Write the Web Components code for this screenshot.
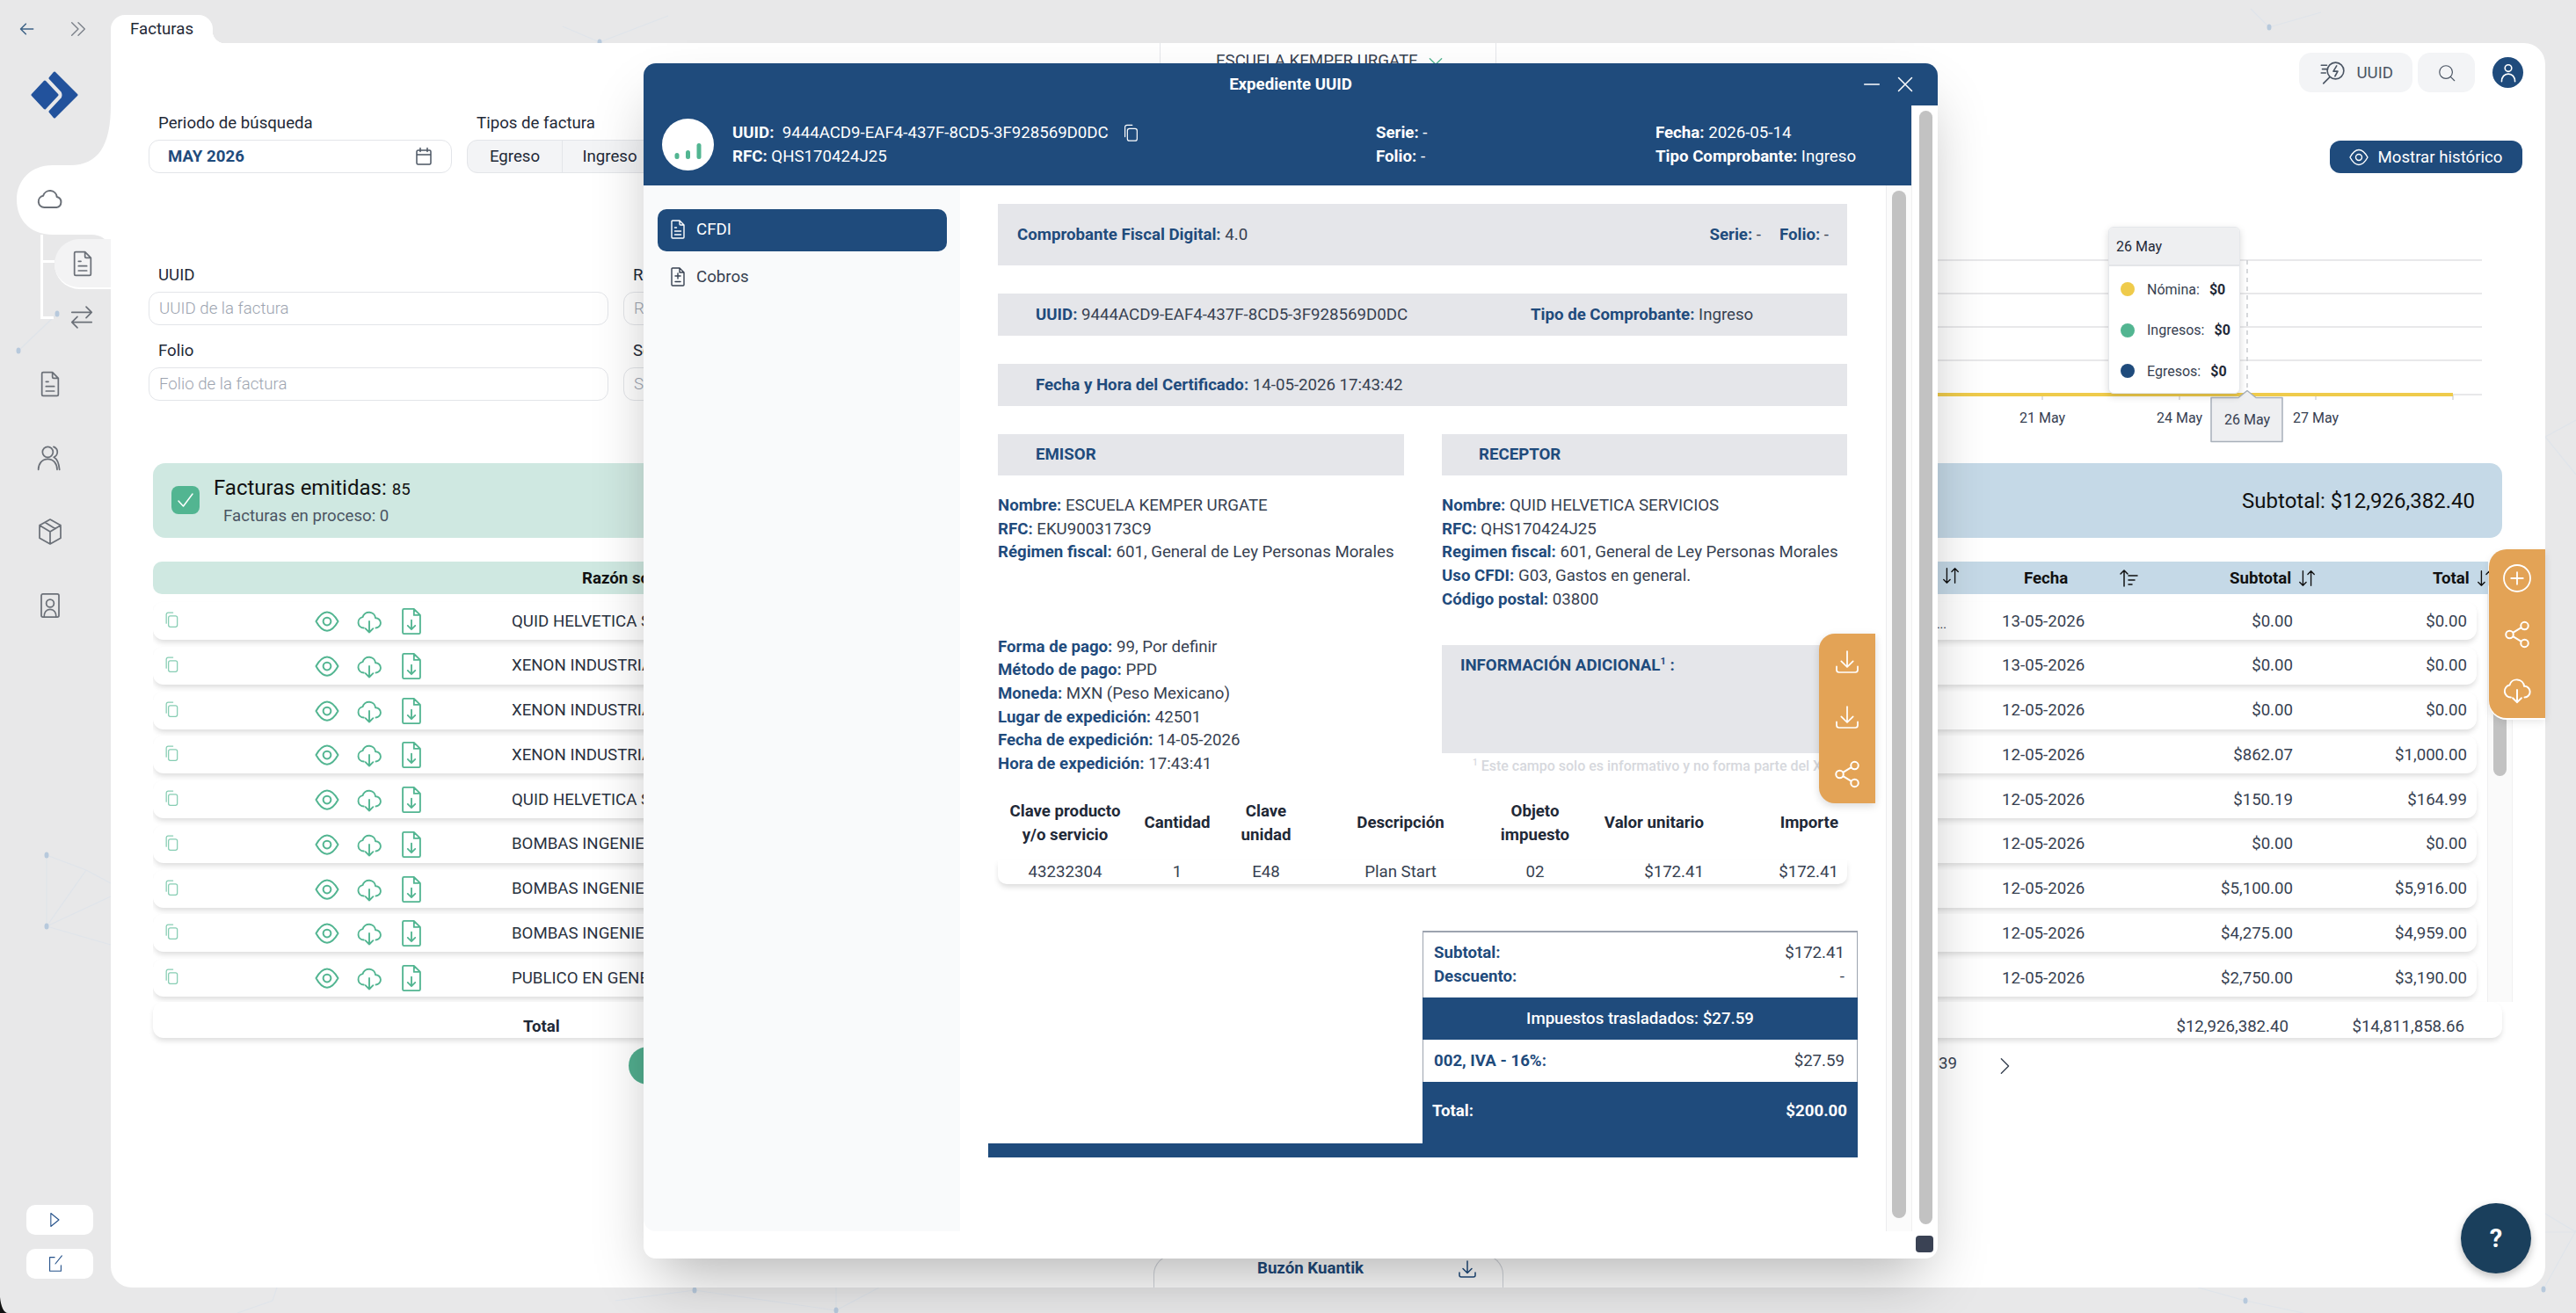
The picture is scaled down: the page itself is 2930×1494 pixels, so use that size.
<!DOCTYPE html>
<html lang="es">
<head>
<meta charset="utf-8">
<title>Facturas</title>
<style>
    html, body { margin: 0; height: 100%; }
    body {
        width: 2930px;
        height: 1494px;
        overflow: hidden;
        position: relative;
        display: grid;
        grid-template-columns: 126px 1fr;
        background: #e8e8e9;
        font-family: Roboto, "Liberation Sans", sans-serif;
        color: #1f2937;
    }
</style>
</head>
<body>
<network-bg></network-bg>
<app-sidebar></app-sidebar>
<app-workspace></app-workspace>
<uuid-modal></uuid-modal>

<script>
// icons, all on a 24 box
const ICONS = {
    doc: 'M6 2h8l5 5v14a1 1 0 0 1-1 1H6a1 1 0 0 1-1-1V3a1 1 0 0 1 1-1zM14 2v4a1 1 0 0 0 1 1h4M8.5 10h2M8.5 14h7M8.5 18h7',
    cobros: 'M6 2h8l5 5v14a1 1 0 0 1-1 1H6a1 1 0 0 1-1-1V3a1 1 0 0 1 1-1zM14 2v5h5M12 8v6M9 11h6M9 17.5h6',
    swap: 'M3 7.5h18M16 2.5l5 5-5 5M21 16.5H3M8 11.5l-5 5 5 5',
    users: 'M10 2.5a4.5 4.5 0 1 1 0 9 4.5 4.5 0 0 1 0-9zM2 22c0-5 3-9 8-9s8 4 8 9M15 2.5c2 .8 3.2 2.5 3.2 4.5s-1.2 3.7-3 4.5c2.8 1.5 4.3 5 4.8 10.5',
    box: 'M12 1.5l9 5v11l-9 5-9-5v-11zM3 6.5l9 5.5 9-5.5M12 12v10.5M7.5 4l9 5.5',
    contact: 'M5.5 1.5h13A1.5 1.5 0 0 1 20 3v18a1.5 1.5 0 0 1-1.5 1.5h-13A1.5 1.5 0 0 1 4 21V3a1.5 1.5 0 0 1 1.5-1.5zM12 6.5a3.5 3.5 0 1 1 0 7 3.5 3.5 0 0 1 0-7zM6.5 22.5c0-4 2-7 5.5-7s5.5 3 5.5 7',
    cloud: 'M7 19.5a5 5 0 0 1-.9-9.9A6 6 0 0 1 17.8 10.5a4.6 4.6 0 0 1-.3 9z',
    back: 'M20 12H4M10 5l-7 7 7 7',
    chevrons: 'M4 4l8 8-8 8M12 4l8 8-8 8',
    calendar: 'M5.5 5h13A1.5 1.5 0 0 1 20 6.5v13a1.5 1.5 0 0 1-1.5 1.5h-13A1.5 1.5 0 0 1 4 19.5v-13A1.5 1.5 0 0 1 5.5 5zM4 10h16M8 2.5v4M16 2.5v4',
    play: 'M7 3l11 9-11 9z',
    external: 'M11 4H5v17h14v-7M12 12l8-10',
    eye: 'M2 12c3-5.5 6-8.5 10-8.5S19 6.5 22 12c-3 5.5-6 8.5-10 8.5S5 17.5 2 12zM12 8.5a3.5 3.5 0 1 1 0 7 3.5 3.5 0 0 1 0-7z',
    clouddown: 'M7 18a5 5 0 0 1-1-9.9A6 6 0 0 1 17.7 9 4.5 4.5 0 0 1 18 18M12 12v10M8.5 18.5L12 22l3.5-3.5',
    filedown: 'M6 2h8l5 5v14a1 1 0 0 1-1 1H6a1 1 0 0 1-1-1V3a1 1 0 0 1 1-1zM14 2v5h5M12 11v7M9 15.5l3 3 3-3',
    copy: 'M5 17V5a2.5 2.5 0 0 1 2.5-2.5H14M10.5 7h7A2.5 2.5 0 0 1 20 9.5v10a2.5 2.5 0 0 1-2.5 2.5h-7A2.5 2.5 0 0 1 8 19.5v-10A2.5 2.5 0 0 1 10.5 7z',
    plus: 'M12 2a10 10 0 1 1 0 20 10 10 0 0 1 0-20zM12 7.5v9M7.5 12h9',
    share: 'M18 2a3 3 0 1 1 0 6 3 3 0 0 1 0-6zM6 9a3 3 0 1 1 0 6 3 3 0 0 1 0-6zM18 16a3 3 0 1 1 0 6 3 3 0 0 1 0-6zM8.7 10.5l6.6-4M8.7 13.5l6.6 4',
    tray: 'M12 3v13M7 11.5l5 5 5-5M3 16v3a2 2 0 0 0 2 2h14a2 2 0 0 0 2-2v-3',
    zap: 'M14 2.5a7.5 7.5 0 1 1 0 15 7.5 7.5 0 0 1 0-15zM9 15.5l-6 6M15 5.5l-3 5h4l-2.5 4.5M1 5h5M2 8.5h3.5M1 12h4',
    search: 'M11 3a8 8 0 1 1 0 16 8 8 0 0 1 0-16zM17 17l4.5 4.5',
    user: 'M12 3.5a3.5 3.5 0 1 1 0 7 3.5 3.5 0 0 1 0-7zM5 21c0-5 3-8 7-8s7 3 7 8',
    sort: 'M7 3v18M3 17l4 4 4-4M17 21V3M13 7l4-4 4 4',
    sortup: 'M6 21V3M2 7l4-4 4 4M11 9h10M11 14h7M11 19h4',
    right: 'M8 3l9 9-9 9',
    down: 'M4 8l8 8 8-8',
    check: 'M4 13l5.5 6L20 5',
    minus: 'M2 12h20',
    close: 'M3 3l18 18M21 3L3 21'
};

class AppIcon extends HTMLElement {
    connectedCallback() {
        const size = this.getAttribute("size") || 24;
        const stroke = this.getAttribute("stroke") || 1.6;
        this.attachShadow({mode: "open"});
        this.shadowRoot.innerHTML = /*html*/`
            <style>
                :host { display: inline-flex; flex: none; line-height: 0; }
            </style>
            <svg width="${size}" height="${size}" viewBox="0 0 24 24" fill="none" stroke="currentColor"
                 stroke-width="${stroke}" stroke-linecap="round" stroke-linejoin="round">
                <path d="${ICONS[this.getAttribute("name")]}"/>
            </svg>`;
    }
}
window.customElements.define("app-icon", AppIcon);

// network-bg
class NetworkBg extends HTMLElement {
    constructor() {
        super();
        this.attachShadow({mode: "open"});
        const lines = [
            [65,357,21,399],[53,973,98,990],[98,990,53,1054],[53,973,53,1054],[53,1054,126,1020],[53,1054,126,1075],
            [98,990,126,1005],[682,48,760,18],[682,48,640,30],[2581,31,2560,10],[2581,31,2640,14],
            [2895,497,2930,478],[2895,497,2930,540],[2895,1381,2930,1402],[2893,1467,2930,1400],[2895,1402,2930,1402],
            [790,1468,951,1491],[790,1468,700,1480],[951,1491,951,1465],[951,1491,1000,1465],
            [315,1465,310,1480],[310,1480,270,1494],[2554,1480,2620,1494],[2554,1480,2500,1465]
        ];
        const dots = [[65,357],[21,399],[53,973],[53,1054],[682,48],[2581,31],[790,1468],[951,1491],[2554,1480],[2893,1467]];
        this.shadowRoot.innerHTML = /*html*/`
            <style>
                :host { position: absolute; inset: 0; display: block; }
            </style>
            <svg width="2930" height="1494" fill="none">
                ${lines.map(l => `<line x1="${l[0]}" y1="${l[1]}" x2="${l[2]}" y2="${l[3]}" stroke="#dfe4ea" stroke-width="1.2"/>`).join("")}
                ${dots.map(d => `<ellipse cx="${d[0]}" cy="${d[1]}" rx="2.5" ry="3.5" fill="#b7c9dc"/>`).join("")}
                <path d="M0 1476C1 1486 4 1494 9 1494H0Z" fill="#111"/>
            </svg>`;
    }
}
window.customElements.define("network-bg", NetworkBg);

// app-sidebar
const appSidebarTemplate = document.createElement("template");
appSidebarTemplate.innerHTML = /*html*/`
    <style>
        :host {
            position: relative;
            display: flex;
            flex-direction: column;
            height: 1494px;
        }
        .bump { position: absolute; left: 0; top: 0; }
        .arrows {
            position: relative;
            height: 66px;
            display: flex;
            align-items: center;
            gap: 37px;
            padding-left: 21px;
            color: #7b8089;
        }
        .arrows app-icon:first-child { color: #3d6286; }
        .logo { position: relative; margin: 15px 0 0 35px; height: 54px; }
        .item {
            position: relative;
            width: 114px;
            height: 84px;
            display: flex;
            align-items: center;
            justify-content: center;
            color: #6b7078;
        }
        .cloud { margin-top: 53px; height: 79px; padding-bottom: 4px; box-sizing: border-box; }
        .tree { position: relative; }
        .tree::before {
            content: "";
            position: absolute;
            left: 46px;
            top: 0;
            width: 12px;
            height: 93px;
            border-left: 3px solid #fff;
            border-bottom: 3px solid #fff;
        }
        .tree::after {
            content: "";
            position: absolute;
            left: 46px;
            top: 29px;
            width: 16px;
            height: 3px;
            background: #fff;
        }
        .sub {
            position: relative;
            margin: 5px 0 0 62px;
            height: 57px;
            box-sizing: border-box;
            background: #f3f3f4;
            border-radius: 30px 0 0 30px;
            border-bottom: 2px solid #fff;
            display: flex;
            align-items: center;
            padding-left: 16px;
            color: #6b7078;
        }
        .sub.plain { background: none; border: 0; height: 64px; margin-top: 0; }
        .links { margin-top: 2px; }
        .bottom {
            position: relative;
            margin: auto 0 39px 30px;
            display: flex;
            flex-direction: column;
            gap: 16px;
            color: #24518a;
        }
        .bottom div {
            width: 76px;
            height: 34px;
            box-sizing: border-box;
            padding-left: 22px;
            background: #fff;
            border-radius: 10px;
            display: flex;
            align-items: center;
        }
    </style>
    <svg class="bump" width="126" height="290" fill="#fff">
        <path d="M126 120C126 165 112 188 80 188H60C34 188 19 206 19 227C19 250 34 267 60 267H104C114 267 122 272 126 282Z"/>
    </svg>
    <div class="arrows">
        <app-icon name="back" size="20" stroke="1.8"></app-icon>
        <app-icon name="chevrons" size="22" stroke="1.5"></app-icon>
    </div>
    <div class="logo">
        <svg width="54" height="54" viewBox="0 0 54 54" fill="#22529c" stroke="#22529c" stroke-width="3" stroke-linejoin="round">
            <path d="M2 27L16 12L30 27L16 42Z"/>
            <path d="M27 2L52 27L27 52L22 46L36 31Q38 27 36 23L22 8Z"/>
        </svg>
    </div>
    <div class="item cloud"><app-icon name="cloud" size="32" stroke="1.5"></app-icon></div>
    <div class="tree">
        <div class="sub"><app-icon name="doc" size="32" stroke="1.3"></app-icon></div>
        <div class="sub plain"><app-icon name="swap" size="30" stroke="1.3"></app-icon></div>
    </div>
    <div class="links">
        <div class="item"><app-icon name="doc" size="32" stroke="1.3"></app-icon></div>
        <div class="item"><app-icon name="users" size="32" stroke="1.3"></app-icon></div>
        <div class="item"><app-icon name="box" size="32" stroke="1.3"></app-icon></div>
        <div class="item"><app-icon name="contact" size="30" stroke="1.4"></app-icon></div>
    </div>
    <div class="bottom">
        <div><app-icon name="play" size="20" stroke="1.3"></app-icon></div>
        <div><app-icon name="external" size="22" stroke="1.2"></app-icon></div>
    </div>
`;

class AppSidebar extends HTMLElement {
    constructor() {
        super();
        this.attachShadow({mode: "open"});
        this.shadowRoot.appendChild(appSidebarTemplate.content.cloneNode(true));
    }
}
window.customElements.define("app-sidebar", AppSidebar);

// field-box
const fieldBoxTemplate = document.createElement("template");
fieldBoxTemplate.innerHTML = /*html*/`
    <style>
        :host { display: block; }
        label {
            display: block;
            height: 22px;
            line-height: 22px;
            margin: 0 0 8px 11px;
            font-size: 18.67px;
            color: #1f2937;
        }
        .box {
            height: 38px;
            box-sizing: border-box;
            border: 1px solid #e3e5e9;
            border-radius: 12px;
            background: #fff;
            padding: 0 11px;
            display: flex;
            align-items: center;
            font-size: 18.67px;
            font-weight: 300;
            color: #9ca3af;
            white-space: nowrap;
        }
    </style>
    <label></label>
    <div class="box"><slot></slot></div>
`;

class FieldBox extends HTMLElement {
    constructor() {
        super();
        this.attachShadow({mode: "open"});
        this.shadowRoot.appendChild(fieldBoxTemplate.content.cloneNode(true));
    }
    connectedCallback() {
        this.shadowRoot.querySelector("label").textContent = this.getAttribute("label");
    }
}
window.customElements.define("field-box", FieldBox);

// sales-chart
const salesChartTemplate = document.createElement("template");
salesChartTemplate.innerHTML = /*html*/`
    <style>
        :host {
            position: relative;
            display: block;
            width: 1330px;
            height: 250px;
            margin-top: 61px;
        }
        svg { display: block; }
        text { font-size: 16px; fill: #374151; text-anchor: middle; }
        .tip {
            position: absolute;
            left: 898px;
            top: 0;
            width: 150px;
            height: 190px;
            box-sizing: border-box;
            background: #fff;
            border: 1px solid #e5e7eb;
            border-radius: 6px;
            box-shadow: 0 3px 8px rgba(0,0,0,.15);
            font-size: 16px;
            overflow: hidden;
        }
        .tip header {
            height: 44px;
            box-sizing: border-box;
            background: #eeeff1;
            border-bottom: 2px solid #e3e5e8;
            padding-left: 8px;
            display: flex;
            align-items: center;
        }
        .tip div {
            height: 46.5px;
            display: flex;
            align-items: center;
            padding-left: 13px;
            color: #374151;
            white-space: nowrap;
        }
        .tip div:first-of-type { margin-top: 3px; }
        .tip i { width: 16px; height: 16px; border-radius: 50%; margin-right: 14px; flex: none; }
        .tip b { margin-left: 11px; color: #1f2937; }
    </style>
    <svg width="1330" height="250" fill="none">
        <path d="M0 38H1323M0 76H1323M0 114H1323M0 152H1323M0 191H1323" stroke="#e8e8ea" stroke-width="2"/>
        <path d="M823 191v6M979 191v6M1134 191v6M1290 191v6" stroke="#e0e0e2" stroke-width="2"/>
        <path d="M0 191H1290" stroke="#efcb4b" stroke-width="4"/>
        <path d="M1056 38V186" stroke="#c9cbd0" stroke-width="1.5" stroke-dasharray="5 5"/>
        <text x="823" y="223">21 May</text>
        <text x="979" y="223">24 May</text>
        <text x="1134" y="223">27 May</text>
        <path d="M1015 194.5h31l10-8 10 8h30v50h-81z" fill="#eeeff1" stroke="#a8b0ba" stroke-width="1.5" stroke-linejoin="round"/>
        <text x="1056" y="225">26 May</text>
    </svg>
    <div class="tip">
        <header>26 May</header>
        <div><i style="background:#efcb4b"></i>Nómina: <b>$0</b></div>
        <div><i style="background:#52b591"></i>Ingresos: <b>$0</b></div>
        <div><i style="background:#1f4b7c"></i>Egresos: <b>$0</b></div>
    </div>
`;

class SalesChart extends HTMLElement {
    constructor() {
        super();
        this.attachShadow({mode: "open"});
        this.shadowRoot.appendChild(salesChartTemplate.content.cloneNode(true));
    }
}
window.customElements.define("sales-chart", SalesChart);

// invoice-table
const invoiceRows = [
    ["QUID HELVETICA SERVICIOS", "13-05-2026", "$0.00", "$0.00", "..."],
    ["XENON INDUSTRIAL", "13-05-2026", "$0.00", "$0.00"],
    ["XENON INDUSTRIAL", "12-05-2026", "$0.00", "$0.00"],
    ["XENON INDUSTRIAL", "12-05-2026", "$862.07", "$1,000.00"],
    ["QUID HELVETICA SERVICIOS", "12-05-2026", "$150.19", "$164.99"],
    ["BOMBAS INGENIERIA", "12-05-2026", "$0.00", "$0.00"],
    ["BOMBAS INGENIERIA", "12-05-2026", "$5,100.00", "$5,916.00"],
    ["BOMBAS INGENIERIA", "12-05-2026", "$4,275.00", "$4,959.00"],
    ["PUBLICO EN GENERAL", "12-05-2026", "$2,750.00", "$3,190.00"]
];

class InvoiceTable extends HTMLElement {
    constructor() {
        super();
        this.attachShadow({mode: "open"});
        const rows = invoiceRows.map(r => /*html*/`
            <div class="row">
                <div class="tools">
                    <app-icon class="copy" name="copy" size="20" stroke="1.5"></app-icon>
                    <app-icon class="a" name="eye" size="30" stroke="1.6"></app-icon>
                    <app-icon class="b" name="clouddown" size="30" stroke="1.5"></app-icon>
                    <app-icon class="c" name="filedown" size="34" stroke="1.3"></app-icon>
                </div>
                <div class="name"><span>${r[0]}</span><small>${r[4] || ""}</small></div>
                <div>${r[1]}</div>
                <div class="num">${r[2]}</div>
                <div class="num">${r[3]}</div>
            </div>`).join("");
        this.shadowRoot.innerHTML = /*html*/`
            <style>
                :host { display: block; font-size: 18.67px; color: #374151; }
                .head {
                    width: 2656px;
                    height: 37px;
                    border-radius: 10px 0 0 10px;
                    background: linear-gradient(90deg, #cfe8e1 50%, #c5d9e7 50%);
                    display: grid;
                    grid-template-columns: 488px 1546px 94px 234px 231px auto;
                    align-items: center;
                    font-weight: 700;
                    color: #111;
                }
                .head span { display: inline-flex; align-items: center; gap: 7px; }
                .body {
                    display: flex;
                    height: 464px;
                    overflow: hidden;
                    width: 2684px;
                }
                .rows {
                    width: 2643px;
                    flex: none;
                    padding-top: 9px;
                    display: flex;
                    flex-direction: column;
                    gap: 7.75px;
                }
                .row {
                    height: 43px;
                    flex: none;
                    background: #fff;
                    border-radius: 12px;
                    box-shadow: 0 4px 6px -1px rgba(0,0,0,.14);
                    display: grid;
                    grid-template-columns: 408px 1695px 143px 188px 198px;
                    align-items: center;
                    white-space: nowrap;
                }
                .tools { position: relative; height: 43px; color: #52b591; }
                .tools app-icon { position: absolute; top: 7px; }
                .copy { left: 11px; top: 10px !important; color: #86cdb3; }
                .a { left: 183px; }
                .b { left: 231px; }
                .c { left: 277px; top: 5px !important; }
                .name { display: flex; justify-content: space-between; padding-right: 63px; color: #2a3240; }
                small { font-size: 14px; align-self: flex-end; }
                .num { text-align: right; }
                .track {
                    flex: none;
                    width: 29px;
                    margin-left: 12px;
                    box-sizing: border-box;
                    background: #fafafa;
                    border: solid #f0f0f1;
                    border-width: 0 1px;
                    padding: 0 6px;
                }
                .track div { height: 207px; border-radius: 8px; background: #c2c2c2; }
                .total {
                    width: 2672px;
                    height: 41px;
                    background: #fff;
                    border-radius: 12px;
                    box-shadow: 0 4px 6px -1px rgba(0,0,0,.14);
                    display: flex;
                    align-items: center;
                    padding: 14px 43px 0 421px;
                    box-sizing: border-box;
                    white-space: nowrap;
                }
                .total b { color: #1f2937; }
                .total span:first-of-type { margin-left: auto; }
                .total span:last-of-type { width: 200px; text-align: right; }
                .pager {
                    height: 43px;
                    margin-top: 10px;
                    padding-left: 541px;
                    width: 2117px;
                    box-sizing: border-box;
                    display: flex;
                    align-items: center;
                    color: #374151;
                }
                .pager i { width: 43px; height: 43px; border-radius: 50%; background: #52ae8f; }
                .pager span { margin-left: auto; margin-top: -5px; }
                .pager app-icon { margin-left: 43px; }
            </style>
            <div class="head">
                <div></div>
                <div>Razón social</div>
                <div><app-icon name="sort" size="22" stroke="1.5"></app-icon></div>
                <div><span style="gap:58px">Fecha <app-icon name="sortup" size="24" stroke="1.5"></app-icon></span></div>
                <div><span>Subtotal <app-icon name="sort" size="22" stroke="1.5"></app-icon></span></div>
                <div><span>Total <app-icon name="sort" size="22" stroke="1.5"></app-icon></span></div>
            </div>
            <div class="body">
                <div class="rows">${rows}</div>
                <div class="track"><div></div></div>
            </div>
            <div class="total">
                <b>Total</b>
                <span>$12,926,382.40</span>
                <span>$14,811,858.66</span>
            </div>
            <div class="pager">
                <i></i>
                <span>39</span>
                <app-icon name="right" size="22" stroke="1.5"></app-icon>
            </div>`;
    }
}
window.customElements.define("invoice-table", InvoiceTable);

// app-workspace
const appWorkspaceTemplate = document.createElement("template");
appWorkspaceTemplate.innerHTML = /*html*/`
    <style>
        :host { display: block; padding: 17px 35px 29px 0; height: 1494px; box-sizing: border-box; }
        .tab {
            position: relative;
            width: 116px;
            height: 32px;
            box-sizing: border-box;
            padding: 0 0 0 22px;
            display: flex;
            align-items: center;
            background: #fff;
            border-radius: 16px 16px 0 0;
            font-size: 18.67px;
            color: #1f2937;
        }
        .tab::after {
            content: "";
            position: absolute;
            left: 100%;
            bottom: 0;
            width: 14px;
            height: 14px;
            background: radial-gradient(circle at 100% 0, transparent 14px, #fff 14.5px);
        }
        .card {
            position: relative;
            height: 1416px;
            background: #fff;
            border-radius: 0 24px 24px 24px;
        }
        .top { display: grid; grid-template-columns: 1193px 383px 1fr; height: 56px; }
        .company {
            border: solid #e6e7ea;
            border-width: 0 1px;
            padding: 11px 0 0 63px;
            font-size: 18.67px;
            line-height: 18px;
            color: #374151;
            display: flex;
            gap: 10px;
            align-items: flex-start;
            box-sizing: border-box;
        }
        .company app-icon { color: #52b591; }
        .actions {
            display: flex;
            justify-content: flex-end;
            align-items: flex-end;
            gap: 6px;
            padding-right: 25px;
        }
        .chip {
            height: 45px;
            box-sizing: border-box;
            display: flex;
            align-items: center;
            gap: 11px;
            background: #f3f4f6;
            border-radius: 14px;
            color: #4b5563;
            font-size: 18.67px;
            padding: 0 22px 0 24px;
        }
        .chip.s { width: 65px; padding: 0 0 0 22px; }
        .avatar {
            width: 35px;
            height: 35px;
            margin: 0 0 5px 14px;
            border-radius: 50%;
            background: #1f4b7c;
            color: #fff;
            display: flex;
            align-items: center;
            justify-content: center;
        }
        .filters {
            margin-top: 22px;
            padding: 0 26px 0 43px;
            display: flex;
            align-items: flex-end;
            gap: 17px;
            height: 70px;
        }
        .filters field-box:first-child { width: 345px; }
        .month { font-weight: 700; color: #1f4b7c; flex: 1; padding-left: 10px; }
        .cal { color: #4b5563; margin-right: 8px; }
        .types { width: 560px; }
        .types .lab { height: 22px; line-height: 22px; margin: 0 0 8px 11px; font-size: 18.67px; color: #1f2937; }
        .seg {
            height: 38px;
            box-sizing: border-box;
            display: flex;
            width: 225px;
            background: #f3f4f6;
            border: 1px solid #e3e5e9;
            border-radius: 12px 0 0 12px;
            font-size: 18.67px;
            align-items: center;
            color: #1f2937;
        }
        .seg span { width: 107px; text-align: center; }
        .seg span + span { border-left: 1px solid #e3e5e9; height: 100%; display: flex; align-items: center; justify-content: center; }
        .show {
            margin-left: auto;
            width: 219px;
            height: 37px;
            background: #1f4b7c;
            color: #fff;
            border-radius: 12px;
            display: flex;
            align-items: center;
            justify-content: center;
            gap: 10px;
            padding-right: 2px;
            box-sizing: border-box;
            font-size: 18.67px;
        }
        .mid { display: flex; }
        .form {
            width: 1331px;
            flex: none;
            padding: 105px 0 0 43px;
            display: grid;
            grid-template-columns: 523px 523px;
            column-gap: 17px;
            row-gap: 18px;
            align-content: start;
        }
        .banners {
            margin: 19px 49px 0 48px;
            height: 85px;
            display: flex;
        }
        .ok {
            flex: 1;
            background: #cfe8e1;
            border-radius: 14px 0 0 14px;
            display: flex;
            align-items: center;
            gap: 16px;
            padding-left: 21px;
            color: #111;
        }
        .tick {
            width: 32px;
            height: 32px;
            border-radius: 8px;
            background: #52b591;
            color: #fff;
            display: flex;
            align-items: center;
            justify-content: center;
            margin-top: -1px;
        }
        .ok h2 { margin: 0; font-size: 24px; font-weight: 400; line-height: 30px; }
        .ok h2 span { font-size: 18.67px; }
        .ok p { margin: 3px 0 0 11px; font-size: 18.67px; line-height: 24px; color: #4b5563; }
        .sum {
            flex: 1;
            background: #c5d9e7;
            border-radius: 0 14px 14px 0;
            display: flex;
            align-items: center;
            justify-content: flex-end;
            padding-right: 31px;
            font-size: 24px;
            color: #111;
        }
        invoice-table { margin: 27px 0 0 48px; }
        .orange {
            position: absolute;
            left: 2705px;
            top: 576px;
            width: 64px;
            height: 192px;
            background: #e3a356;
            border-radius: 20px 0 0 20px;
            box-shadow: 0 2px 0 #fff, 0 4px 10px rgba(0,0,0,.1);
            display: flex;
            flex-direction: column;
            align-items: center;
            justify-content: space-around;
            color: #fff;
        }
        .help {
            position: absolute;
            right: 16px;
            bottom: 16px;
            width: 80px;
            height: 80px;
            border-radius: 50%;
            background: #1a3f5c;
            color: #fff;
            font-size: 29px;
            font-weight: 700;
            display: flex;
            align-items: center;
            justify-content: center;
            box-shadow: 0 4px 10px rgba(0,0,0,.25);
        }
        .mail {
            position: absolute;
            left: 1186px;
            bottom: 0;
            width: 398px;
            height: 37px;
            box-sizing: border-box;
            border: 1px solid #d1d5db;
            border-bottom: 0;
            border-radius: 22px 22px 0 0;
            display: flex;
            padding: 3px 0 0 117px;
            font-weight: 700;
            font-size: 18.67px;
            color: #1f4b7c;
        }
        .mail app-icon { margin-left: 106px; }
    </style>
    <div class="tab">Facturas</div>
    <div class="card">
        <div class="top">
            <div></div>
            <div class="company">ESCUELA KEMPER URGATE <app-icon name="down" size="20" stroke="1.6"></app-icon></div>
            <div class="actions">
                <div class="chip"><app-icon name="zap" size="30" stroke="1.3"></app-icon>UUID</div>
                <div class="chip s"><app-icon name="search" size="22" stroke="1.3"></app-icon></div>
                <div class="avatar"><app-icon name="user" size="26" stroke="1.5"></app-icon></div>
            </div>
        </div>
        <div class="filters">
            <field-box label="Periodo de búsqueda">
                <span class="month">MAY 2026</span>
                <app-icon class="cal" name="calendar" size="24" stroke="1.5"></app-icon>
            </field-box>
            <div class="types">
                <div class="lab">Tipos de factura</div>
                <div class="seg"><span>Egreso</span><span>Ingreso</span></div>
            </div>
            <div class="show"><app-icon name="eye" size="24" stroke="1.4"></app-icon>Mostrar histórico</div>
        </div>
        <div class="mid">
            <div class="form">
                <field-box label="UUID">UUID de la factura</field-box>
                <field-box label="RFC">RFC</field-box>
                <field-box label="Folio">Folio de la factura</field-box>
                <field-box label="Serie">Serie</field-box>
            </div>
            <sales-chart></sales-chart>
        </div>
        <div class="banners">
            <div class="ok">
                <div class="tick"><app-icon name="check" size="24" stroke="1.5"></app-icon></div>
                <div>
                    <h2>Facturas emitidas: <span>85</span></h2>
                    <p>Facturas en proceso: 0</p>
                </div>
            </div>
            <div class="sum">Subtotal: $12,926,382.40</div>
        </div>
        <invoice-table></invoice-table>
        <div class="orange">
            <app-icon name="plus" size="36" stroke="1.2"></app-icon>
            <app-icon name="share" size="34" stroke="1.4"></app-icon>
            <app-icon name="clouddown" size="34" stroke="1.4"></app-icon>
        </div>
        <div class="mail">Buzón Kuantik <app-icon name="tray" size="24" stroke="1.5"></app-icon></div>
        <div class="help">?</div>
    </div>
`;

class AppWorkspace extends HTMLElement {
    constructor() {
        super();
        this.attachShadow({mode: "open"});
        this.shadowRoot.appendChild(appWorkspaceTemplate.content.cloneNode(true));
    }
}
window.customElements.define("app-workspace", AppWorkspace);

// key-value
const keyValueTemplate = document.createElement("template");
keyValueTemplate.innerHTML = /*html*/`
    <style>
        :host { display: block; line-height: var(--kv-line, 26.7px); white-space: nowrap; }
        b { color: var(--kv-key, #1f4b7c); font-weight: 700; }
    </style>
    <b></b> <slot></slot>
`;

class KeyValue extends HTMLElement {
    constructor() {
        super();
        this.attachShadow({mode: "open"});
        this.shadowRoot.appendChild(keyValueTemplate.content.cloneNode(true));
    }
    connectedCallback() {
        this.shadowRoot.querySelector("b").textContent = this.getAttribute("k");
    }
}
window.customElements.define("key-value", KeyValue);

// section-bar
const sectionBarTemplate = document.createElement("template");
sectionBarTemplate.innerHTML = /*html*/`
    <style>
        :host {
            display: flex;
            align-items: center;
            background: #e5e6ea;
            height: var(--bar-h, 48px);
            padding-left: var(--bar-pad, 43px);
            box-sizing: border-box;
        }
    </style>
    <slot></slot>
`;

class SectionBar extends HTMLElement {
    constructor() {
        super();
        this.attachShadow({mode: "open"});
        this.shadowRoot.appendChild(sectionBarTemplate.content.cloneNode(true));
    }
}
window.customElements.define("section-bar", SectionBar);

// cfdi-doc
const cfdiDocTemplate = document.createElement("template");
cfdiDocTemplate.innerHTML = /*html*/`
    <style>
        :host {
            position: relative;
            display: block;
            background: #fff;
            padding: 21px 44px 0 43px;
            font-size: 18.67px;
            color: #374151;
            overflow: hidden;
        }
        .first { --bar-h: 70px; --bar-pad: 22px; margin-bottom: 32px; padding-right: 21px; }
        .first key-value:first-child { flex: 1; }
        .first key-value + key-value { margin-left: 21px; }
        .bar { margin-bottom: 32px; }
        .bar key-value:first-child { width: 563px; }
        .cols { display: grid; grid-template-columns: 462px 461px; column-gap: 43px; }
        .title { font-weight: 700; color: #1f4b7c; }
        .cols section-bar .title { margin-top: -2px; }
        .plist { margin-top: 21px; }
        .pay { margin-top: 27px; }
        .extra { margin-top: 38px; height: 123px; background: #e5e6ea; padding: 12px 21px; box-sizing: border-box; }
        .extra sup { font-size: 11px; }
        .note {
            margin: 1px 0 0 35px;
            white-space: nowrap;
            font-size: 16px;
            line-height: 20px;
            font-weight: 500;
            color: #d6d8dd;
        }
        .lines {
            margin-top: 28px;
            display: grid;
            grid-template-columns: 153px 102px 100px 206px 100px 172px 133px;
            text-align: center;
        }
        .lines .h {
            height: 52px;
            line-height: 26.5px;
            font-weight: 700;
            color: #1f2937;
            display: flex;
            align-items: center;
            justify-content: center;
        }
        .lines .r { text-align: right; justify-content: flex-end; padding-right: 30px; }
        .lines .r2 { text-align: right; justify-content: flex-end; padding-right: 10px; }
        .line {
            grid-column: 1 / -1;
            margin-top: 15px;
            height: 28px;
            display: grid;
            grid-template-columns: 153px 102px 100px 206px 100px 172px 133px;
            align-items: center;
            border-radius: 0 0 10px 10px;
            box-shadow: 0 4px 6px -1px rgba(0,0,0,.15);
            color: #374151;
        }
        .totals { margin: 53px -12px 0 -11px; display: flex; align-items: flex-end; }
        .totals .bar-left { flex: 1; height: 16px; background: #1f4b7c; }
        .box { width: 495px; flex: none; }
        .box .t {
            height: 76px;
            box-sizing: border-box;
            border: solid #9ca3af;
            border-width: 2px 1px 0;
            padding: 10px 14px 0 12px;
        }
        .box .kv { display: flex; justify-content: space-between; line-height: 27px; }
        .box b { color: #1f4b7c; }
        .band {
            height: 48px;
            background: #1f4b7c;
            color: #fff;
            font-weight: 500;
            display: flex;
            align-items: center;
            justify-content: center;
        }
        .iva {
            height: 48px;
            box-sizing: border-box;
            border: solid #9ca3af;
            border-width: 0 1px;
            padding: 0 14px 0 12px;
            display: flex;
            align-items: center;
            justify-content: space-between;
        }
        .grand {
            height: 86px;
            box-sizing: border-box;
            padding: 22px 12px 0 11px;
            background: #1f4b7c;
            color: #fff;
            font-weight: 700;
            display: flex;
            justify-content: space-between;
        }
        .dock {
            position: absolute;
            left: 977px;
            top: 510px;
            width: 64px;
            height: 193px;
            background: #e3a356;
            border-radius: 18px 0 0 18px;
            box-shadow: 0 3px 10px rgba(0,0,0,.15);
            display: flex;
            flex-direction: column;
            align-items: center;
            justify-content: space-around;
            color: #fff;
        }
    </style>
    <section-bar class="first">
        <key-value k="Comprobante Fiscal Digital:">4.0</key-value>
        <key-value k="Serie:">-</key-value>
        <key-value k="Folio:">-</key-value>
    </section-bar>
    <section-bar class="bar">
        <key-value k="UUID:">9444ACD9-EAF4-437F-8CD5-3F928569D0DC</key-value>
        <key-value k="Tipo de Comprobante:">Ingreso</key-value>
    </section-bar>
    <section-bar class="bar">
        <key-value k="Fecha y Hora del Certificado:" style="width:auto">14-05-2026 17:43:42</key-value>
    </section-bar>
    <div class="cols">
        <section-bar style="--bar-h:47px"><span class="title">EMISOR</span></section-bar>
        <section-bar style="--bar-h:47px;--bar-pad:42px"><span class="title">RECEPTOR</span></section-bar>
        <div class="plist">
            <key-value k="Nombre:">ESCUELA KEMPER URGATE</key-value>
            <key-value k="RFC:">EKU9003173C9</key-value>
            <key-value k="Régimen fiscal:">601, General de Ley Personas Morales</key-value>
        </div>
        <div class="plist">
            <key-value k="Nombre:">QUID HELVETICA SERVICIOS</key-value>
            <key-value k="RFC:">QHS170424J25</key-value>
            <key-value k="Regimen fiscal:">601, General de Ley Personas Morales</key-value>
            <key-value k="Uso CFDI:">G03, Gastos en general.</key-value>
            <key-value k="Código postal:">03800</key-value>
        </div>
        <div class="pay">
            <key-value k="Forma de pago:">99, Por definir</key-value>
            <key-value k="Método de pago:">PPD</key-value>
            <key-value k="Moneda:">MXN (Peso Mexicano)</key-value>
            <key-value k="Lugar de expedición:">42501</key-value>
            <key-value k="Fecha de expedición:">14-05-2026</key-value>
            <key-value k="Hora de expedición:">17:43:41</key-value>
        </div>
        <div>
            <div class="extra"><span class="title">INFORMACIÓN ADICIONAL<sup>1</sup> :</span></div>
            <div class="note"><sup style="font-size:10px">1</sup> Este campo solo es informativo y no forma parte del XML</div>
        </div>
    </div>
    <div class="lines">
        <div class="h">Clave producto<br>y/o servicio</div>
        <div class="h">Cantidad</div>
        <div class="h">Clave<br>unidad</div>
        <div class="h">Descripción</div>
        <div class="h">Objeto<br>impuesto</div>
        <div class="h r">Valor unitario</div>
        <div class="h r2">Importe</div>
        <div class="line">
            <div>43232304</div>
            <div>1</div>
            <div>E48</div>
            <div>Plan Start</div>
            <div>02</div>
            <div class="r">$172.41</div>
            <div class="r2">$172.41</div>
        </div>
    </div>
    <div class="totals">
        <div class="bar-left"></div>
        <div class="box">
            <div class="t">
                <div class="kv"><b>Subtotal:</b><span>$172.41</span></div>
                <div class="kv"><b>Descuento:</b><span>-</span></div>
            </div>
            <div class="band">Impuestos trasladados: $27.59</div>
            <div class="iva"><b>002, IVA - 16%:</b><span>$27.59</span></div>
            <div class="grand"><span>Total:</span><span>$200.00</span></div>
        </div>
    </div>
    <div class="dock">
        <app-icon name="tray" size="32" stroke="1.3"></app-icon>
        <app-icon name="tray" size="32" stroke="1.3"></app-icon>
        <app-icon name="share" size="34" stroke="1.4"></app-icon>
    </div>
`;

class CfdiDoc extends HTMLElement {
    constructor() {
        super();
        this.attachShadow({mode: "open"});
        this.shadowRoot.appendChild(cfdiDocTemplate.content.cloneNode(true));
    }
}
window.customElements.define("cfdi-doc", CfdiDoc);

// uuid-modal
const uuidModalTemplate = document.createElement("template");
uuidModalTemplate.innerHTML = /*html*/`
    <style>
        :host {
            position: absolute;
            left: 732px;
            top: 72px;
            width: 1472px;
            height: 1360px;
            display: grid;
            grid-template-columns: 1442px 30px;
            grid-template-rows: 48px 1281px 31px;
            background: #fff;
            border-radius: 14px;
            box-shadow: 0 33px 66px -16px rgba(0,0,0,.3);
            font-size: 18.67px;
        }
        .title {
            grid-column: 1 / -1;
            background: #1f4b7c;
            border-radius: 14px 14px 0 0;
            color: #fff;
            display: grid;
            grid-template-columns: 1fr auto 1fr;
            align-items: center;
            font-weight: 700;
        }
        .title .ctl { display: flex; justify-content: flex-end; gap: 18px; padding-right: 27px; }
        .inner { display: flex; flex-direction: column; min-height: 0; }
        .info {
            height: 91px;
            box-sizing: border-box;
            background: #1f4b7c;
            color: #fff;
            --kv-key: #fff;
            --kv-line: 27px;
            padding: 0 0 2px 21px;
            display: grid;
            grid-template-columns: 80px 732px 318px 1fr;
            align-items: center;
        }
        .seal { width: 59px; height: 59px; display: block; }
        .uuid { display: flex; align-items: center; }
        .uuid app-icon { margin-left: 14px; }
        .panes { flex: 1; display: flex; min-height: 0; }
        nav {
            width: 360px;
            flex: none;
            box-sizing: border-box;
            background: #f9fafb;
            border-radius: 0 0 0 14px;
            padding: 27px 15px 0 16px;
            color: #374151;
        }
        nav div {
            height: 48px;
            display: flex;
            align-items: center;
            gap: 9px;
            padding-left: 11px;
            margin-bottom: 4px;
            border-radius: 10px;
        }
        nav .on { background: #1f4b7c; color: #fff; padding-bottom: 2px; box-sizing: border-box; }
        cfdi-doc { width: 1053px; flex: none; box-sizing: border-box; }
        .sbar {
            flex: none;
            width: 29px;
            box-sizing: border-box;
            background: #fbfbfb;
            border-left: 1px solid #ececee;
            padding: 6px 6px 0 6px;
        }
        .sbar div { height: 1169px; border-radius: 8px; background: #c2c2c2; }
        .outer { background: #fff; padding: 6px 6px 0 8px; border-left: 1px solid #f0f0f1; box-sizing: border-box; }
        .outer div { height: 1267px; border-radius: 8px; background: #c2c2c2; }
        .foot { grid-column: 1 / -1; display: flex; justify-content: flex-end; padding: 5px 5px 0 0; }
        .foot i { width: 20px; height: 19px; border-radius: 4px; background: #3a4254; }
    </style>
    <div class="title">
        <span></span>
        <span>Expediente UUID</span>
        <div class="ctl">
            <app-icon name="minus" size="20" stroke="1.8"></app-icon>
            <app-icon name="close" size="20" stroke="1.8"></app-icon>
        </div>
    </div>
    <div class="inner">
        <div class="info">
            <svg class="seal" viewBox="0 0 59 59">
                <circle cx="29.5" cy="29.5" r="29.5" fill="#fff"/>
                <g fill="#52b591">
                    <rect x="14.5" y="39" width="5" height="7" rx="2.5"/>
                    <rect x="27" y="36" width="5" height="10" rx="2.5"/>
                    <rect x="39.5" y="28" width="5" height="18" rx="2.5"/>
                </g>
            </svg>
            <div>
                <div class="uuid">
                    <key-value k="UUID:">&nbsp;9444ACD9-EAF4-437F-8CD5-3F928569D0DC</key-value>
                    <app-icon name="copy" size="22" stroke="1.3"></app-icon>
                </div>
                <key-value k="RFC:">QHS170424J25</key-value>
            </div>
            <div>
                <key-value k="Serie:">-</key-value>
                <key-value k="Folio:">-</key-value>
            </div>
            <div>
                <key-value k="Fecha:">2026-05-14</key-value>
                <key-value k="Tipo Comprobante:">Ingreso</key-value>
            </div>
        </div>
        <div class="panes">
            <nav>
                <div class="on"><app-icon name="doc" size="24" stroke="1.4"></app-icon>CFDI</div>
                <div style="margin-top:5px"><app-icon name="cobros" size="24" stroke="1.4"></app-icon>Cobros</div>
            </nav>
            <cfdi-doc></cfdi-doc>
            <div class="sbar"><div></div></div>
        </div>
    </div>
    <div class="outer"><div></div></div>
    <div class="foot"><i></i></div>
`;

class UuidModal extends HTMLElement {
    constructor() {
        super();
        this.attachShadow({mode: "open"});
        this.shadowRoot.appendChild(uuidModalTemplate.content.cloneNode(true));
    }
}
window.customElements.define("uuid-modal", UuidModal);
</script>
</body>
</html>
